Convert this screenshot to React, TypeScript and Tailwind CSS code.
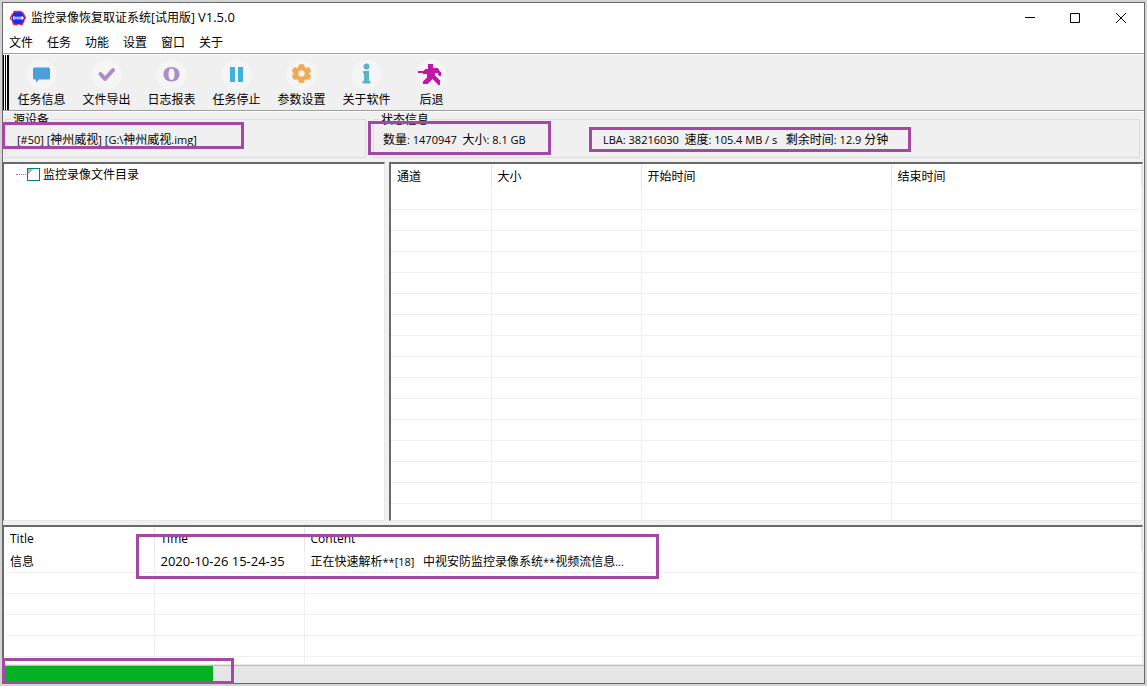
import React from "react";

const menus = ["文件", "任务", "功能", "设置", "窗口", "关于"];

const tools: { label: string; icon: React.ReactNode }[] = [
  { label: "任务信息", icon: <path d="M8.500 8.500h14q1.500 0 1.500 1.500v9q0 1.500-1.500 1.500h-9.500l-3 3v-3h-1.500q-1.500 0-1.500-1.500v-9q0-1.500 1.500-1.500z" fill="#4b9fdb" /> },
  { label: "文件导出", icon: <path d="M9.500 15l4.500 5 8-9" fill="none" stroke="#a98dc4" strokeWidth="4" strokeLinecap="round" strokeLinejoin="round" /> },
  { label: "日志报表", icon: <path fillRule="evenodd" d="M15.500 8c5 0 8 3 8 7.200s-3 7.200-8 7.200-8-3-8-7.200 3-7.200 8-7.200zm0 1.500c-2 0-3 2-3 5.700s1 5.700 3 5.700 3-2 3-5.700-1-5.700-3-5.700z" fill="#a98dc4" /> },
  { label: "任务停止", icon: <path d="M9 8h5v15H9zM17 8h5v15h-5z" fill="#3fb0e4" /> },
  {
    label: "参数设置",
    icon: (
      <path
        fillRule="evenodd"
        d="M13.500 5.500h4l1 2.700 1.700 1 2.800-.6 2 3.500-1.900 2.200v.6l1.900 2.200-2 3.500-2.800-.6-1.700 1-1 2.700h-4l-1-2.700-1.700-1-2.800.6-2-3.500 1.900-2.200v-.6L6 12.100l2-3.500 2.800.6 1.700-1zM15.500 11a3.500 3.500 0 1 0 0 7 3.500 3.500 0 0 0 0-7z"
        fill="#efaa56"
        stroke="#efaa56"
        strokeWidth=".6"
        strokeLinejoin="round"
      />
    ),
  },
  { label: "关于软件", icon: <path d="M15.500 4.500a3 3 0 1 1 0 6 3 3 0 0 1 0-6zM12 12h6v10h1.500v2.500h-8V22H13v-7.500h-1z" fill="#5cb3c9" /> },
  { label: "后退", icon: <path d="M12 5h5v4h4l2 2 2 3v3h-2l-1-3h-3v3l3 3 2 2v4h-2l-2-3-4-3-3 3-2 2H7v-2l2-3 2-2v-3H8l-2-1H2v-2h5l3-2h2z" fill="#c316a8" shapeRendering="crispEdges" /> },
];

const fileColumns = [
  { label: "通道", width: "w-[100px]" },
  { label: "大小", width: "w-[150px]" },
  { label: "开始时间", width: "w-[250px]" },
  { label: "结束时间", width: "w-auto" },
];

const logColumns = [
  { label: "Title", width: "w-[150px]" },
  { label: "Time", width: "w-[150px]" },
  { label: "Content", width: "w-auto" },
];

const sunken = "border-t-2 border-r border-b border-t-[#696969] border-l-[#696969] border-r-[#e8e8e8] border-b-[#e8e8e8] bg-white";

function Logo() {
  return (
    <svg width="16" height="16" viewBox="0 0 16 16" aria-hidden="true">
      <path d="M4 1.500h8l3.500 6.500-3.500 6.500H4L.5 8z" fill="#1a2af0" stroke="#f0233c" strokeWidth="1.500" strokeDasharray="7 2" />
      <path d="M3 6.500h2.500v1H4v1h1.500v1H3zM6.500 6.500h1v3h-1zM8.500 6.500h1v3h-1zM10.500 6.500H13v3h-2.500z" fill="#fff" />
      <path d="M1 8h14" stroke="#fff" strokeDasharray="1 1" />
    </svg>
  );
}

/* Han characters are set one pixel larger than the Latin text around them. */
function Mixed({ text }: { text: string }) {
  return (
    <>
      {text.split(/([\u4e00-\u9fff]+)/).map((part, i) =>
        i % 2 === 1 ? <span key={i} className="text-[12px]">{part}</span> : part,
      )}
    </>
  );
}

function Group({ title, className, children }: { title: string; className: string; children: React.ReactNode }) {
  return (
    <fieldset className={`h-[45px] min-w-0 border border-[#dcdcdc] ${className}`}>
      <legend className="ml-[5px] px-[2px] text-[12px] leading-[13px]">{title}</legend>
      {children}
    </fieldset>
  );
}

function Mark({ className }: { className: string }) {
  return <div aria-hidden="true" className={`pointer-events-none absolute border-3 border-[#a349a4] ${className}`} />;
}

export default function App() {
  return (
    <div className="relative flex h-screen flex-col bg-[#d4d4d4] p-[2px] font-['Open_Sans','Noto_Sans_CJK_SC',sans-serif] text-[12px] leading-[16px] text-black">
      <div className="flex min-h-0 flex-1 flex-col border border-[#696969] bg-[#f0f0f0]">
        <header className="flex h-[29px] shrink-0 items-center bg-white pl-[7px]">
          <Logo />
          <h1 className="ml-[5px] flex-1 whitespace-pre">
            监控录像恢复取证系统[试用版] <span className="text-[13px]">V1.5.0</span>
          </h1>
          <button aria-label="最小化" className="flex h-full w-[46px] items-center justify-center">
            <svg width="10" height="10"><path d="M0 4.500h10" stroke="#000" /></svg>
          </button>
          <button aria-label="最大化" className="flex h-full w-[44px] items-center justify-center">
            <svg width="10" height="10"><path d="M.5.5h9v9h-9z" fill="none" stroke="#000" /></svg>
          </button>
          <button aria-label="关闭" className="flex h-full w-[47px] items-center justify-center">
            <svg width="10" height="10"><path d="M0 0l10 10M10 0L0 10" stroke="#000" /></svg>
          </button>
        </header>

        <nav className="flex h-[22px] shrink-0 items-center gap-[14px] border-b border-[#a0a0a0] bg-white pl-[6px]">
          {menus.map((m) => (
            <button key={m}>{m}</button>
          ))}
        </nav>

        <div className="flex h-[57px] shrink-0 border-t border-b border-t-white border-b-[#a0a0a0]">
          <div className="flex w-[6px] border-r-2 border-l border-black bg-white px-[1px]">
            <span className="w-[1px] bg-black" />
          </div>
          {tools.map((t) => (
            <button key={t.label} className="flex w-[65px] flex-col items-center pt-[4px]">
              <svg width="31" height="31" viewBox="0 0 31 31" aria-hidden="true">
                <circle cx="15.500" cy="15.500" r="15" fill="#f5f5f5" />
                {t.icon}
              </svg>
              <span className="mt-[2px]">{t.label}</span>
            </button>
          ))}
        </div>

        <section className="flex h-[51px] shrink-0 border-t border-white pt-[1px] text-[11px]">
          <Group title="源设备" className="ml-[2px] w-[361px]">
            <p className="pl-[11px] pt-[6px] whitespace-pre"><Mixed text="[#50] [神州威视] [G:\神州威视.img]" /></p>
          </Group>
          <Group title="状态信息" className="mr-[4px] ml-[7px] flex-1">
            <div className="flex pt-[6px] pl-[9px] whitespace-pre">
              <p className="w-[220px]"><Mixed text="数量: 1470947  大小: 8.1 GB" /></p>
              <p><Mixed text="LBA: 38216030  速度: 105.4 MB / s   剩余时间: 12.9 分钟" /></p>
            </div>
          </Group>
        </section>

        <main className="flex min-h-0 flex-1 gap-[4px]">
          <aside className={`w-[382px] shrink-0 border-l ${sunken}`}>
            <label className="flex h-[21px] items-center pl-[12px]">
              <span className="w-[10px] border-t border-dotted border-[#808080]" />
              <input type="checkbox" className="mr-[3px] ml-[1px] size-[13px] appearance-none border border-solid border-[#008080] bg-linear-135 from-[#b8b8b8] from-25% to-white to-25%" />
              监控录像文件目录
            </label>
          </aside>
          <div className={`mr-[1px] min-w-0 flex-1 overflow-hidden border-l-2 ${sunken}`}>
            <table className="w-full table-fixed border-collapse">
              <thead>
                <tr className="h-[24px]">
                  {fileColumns.map((c) => (
                    <th key={c.label} className={`border-r border-[#e5e5e5] pt-[2px] pl-[6px] text-left font-normal ${c.width}`}>{c.label}</th>
                  ))}
                </tr>
              </thead>
              <tbody>
                {Array.from({ length: 16 }, (_, r) => (
                  <tr key={r} className="h-[21px] border-b border-[#f0f0f0]">
                    {fileColumns.map((c) => (
                      <td key={c.label} className="border-r border-[#f0f0f0]" />
                    ))}
                  </tr>
                ))}
              </tbody>
            </table>
          </div>
        </main>

        <section className={`mt-[4px] mr-[1px] h-[140px] shrink-0 overflow-hidden border-l ${sunken}`}>
          <table className="w-full table-fixed border-collapse">
            <thead>
              <tr className="h-[24px]">
                {logColumns.map((c) => (
                  <th key={c.label} className={`border-r border-[#e5e5e5] pl-[6px] text-left font-normal ${c.width}`}>{c.label}</th>
                ))}
              </tr>
            </thead>
            <tbody>
              <tr className="h-[21px] border-b border-[#f0f0f0]">
                <td className="border-r border-[#f0f0f0] pt-[2px] pl-[6px]">信息</td>
                <td className="border-r border-[#f0f0f0] pl-[6px] text-[13px]">2020-10-26 15-24-35</td>
                <td className="pt-[2px] pl-[6px] text-[11px] whitespace-pre"><Mixed text="正在快速解析**[18]   中视安防监控录像系统**视频流信息..." /></td>
              </tr>
              {[1, 2, 3, 4, 5].map((r) => (
                <tr key={r} className="h-[21px] border-b border-[#f0f0f0]">
                  <td className="border-r border-[#f0f0f0]" />
                  <td className="border-r border-[#f0f0f0]" />
                  <td />
                </tr>
              ))}
            </tbody>
          </table>
        </section>

        <div role="progressbar" aria-label="进度" aria-valuenow={18} aria-valuemin={0} aria-valuemax={100} className="h-[18px] shrink-0 border-t border-[#bcbcbc] bg-[#e6e6e6] pl-[2px]">
          <div className="h-full w-[208px] bg-[#06b025]" />
        </div>
      </div>

      <Mark className="top-[122px] left-[2px] h-[27px] w-[242px]" />
      <Mark className="top-[121px] left-[368px] h-[34px] w-[183px]" />
      <Mark className="top-[127px] left-[589px] h-[25px] w-[322px]" />
      <Mark className="top-[534px] left-[136px] h-[45px] w-[523px]" />
      <Mark className="top-[658px] left-[2px] h-[26px] w-[232px]" />
    </div>
  );
}
